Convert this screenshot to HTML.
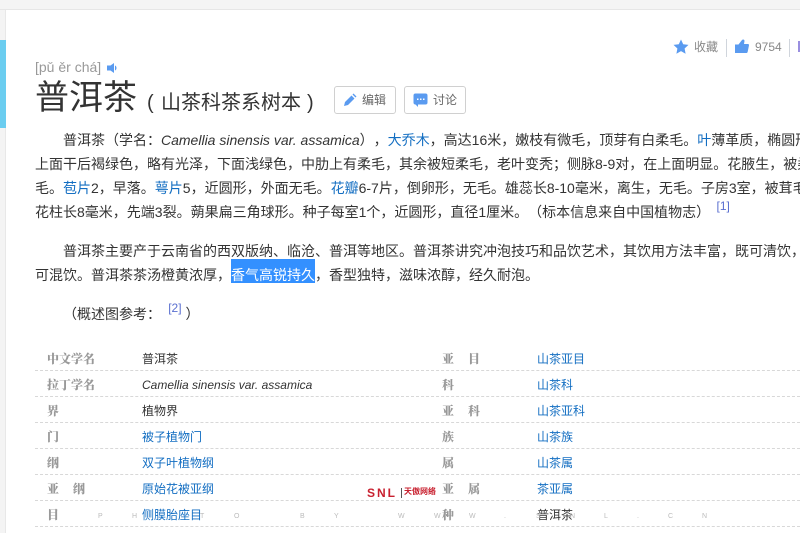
<!DOCTYPE html>
<html lang="zh"><head><meta charset="utf-8">
<style>
html,body{margin:0;padding:0;width:800px;height:533px;overflow:hidden;background:#fff}
body{position:relative;font-family:"Liberation Sans","WenQuanYi Zen Hei","Noto Sans CJK SC",sans-serif;color:#333;font-size:14px;text-spacing-trim:space-all}
.a{position:absolute;white-space:nowrap}
a{color:#136ec2;text-decoration:none}
i{font-style:italic}
.l{position:absolute;left:35px;height:24px;line-height:24px;white-space:nowrap;font-size:14px}
.sup{color:#5a6fd0;font-size:12px;position:relative;top:-7px}
.k{position:absolute;font-family:"Liberation Sans","Noto Serif CJK SC",serif;font-weight:900;color:#999;font-size:12px;line-height:26px;white-space:nowrap}
.k b{margin-left:14px;font-weight:900}
.v{position:absolute;font-size:12px;line-height:26px;white-space:nowrap}
.d{position:absolute;left:35px;right:0;border-top:1px dashed #d8d8d8;height:0}
.w{position:absolute;top:513px;font-size:7px;color:#bbb;line-height:8px}
.btn{position:absolute;top:86px;height:26px;border:1px solid #d0d0d0;border-radius:3px;width:60px;font-size:12px;line-height:26px;color:#666}
</style></head><body>
<div class="a" style="left:0;top:0;width:800px;height:9px;background:#f4f4f4"></div>
<div class="a" style="left:0;top:9px;width:800px;height:1px;background:#e6e6e6"></div>
<div class="a" style="left:0;top:10px;width:5px;height:523px;background:#f4f4f4"></div>
<div class="a" style="left:5px;top:10px;width:1px;height:523px;background:#e8e8e8"></div>
<div class="a" style="left:0;top:40px;width:6px;height:88px;background:#6bcdf0"></div>

<div class="a" style="left:35px;top:58px;font-size:14px;line-height:18px;color:#999">[pǔ ěr chá]</div>
<svg class="a" style="left:106px;top:62px" width="13" height="12" viewBox="0 0 13 12"><path d="M1 3.500h3.500L8 1v10L4.500 8.500H1z" fill="#5a9bf0"/><path d="M9 3.500c2 .7 2 4.300 0 5z" fill="#5a9bf0"/></svg>
<div class="a" style="left:35px;top:77px;font-size:34px;line-height:42px;color:#333">普洱茶</div>
<div class="a" style="left:147px;top:90px;font-size:20px;line-height:26px;color:#333">(</div>
<div class="a" style="left:161px;top:90px;font-size:20px;line-height:26px;color:#333">山茶科茶系树本</div>
<div class="a" style="left:307px;top:90px;font-size:20px;line-height:26px;color:#333">)</div>

<div class="btn" style="left:334px"><svg class="a" style="left:8px;top:6px" width="14" height="14" viewBox="0 0 14 14"><path d="M1 13l1-4 6.500-6.500 3 3L5 12z M9.500 1.500l1-1 3 3-1 1z" fill="#5a9bf0"/></svg><span class="a" style="left:27px;top:0">编辑</span></div>
<div class="btn" style="left:404px"><svg class="a" style="left:8px;top:6px" width="15" height="14" viewBox="0 0 15 14"><rect x="0.500" y="0.500" width="14" height="11" rx="2" fill="#5a9bf0"/><path d="M2 11h3v3z" fill="#5a9bf0"/><path d="M4 5.500h1.500V7H4zM7 5.500h1.500V7H7zM10 5.500h1.500V7H10z" fill="#fff"/></svg><span class="a" style="left:28px;top:0">讨论</span></div>

<svg class="a" style="left:673px;top:39px" width="16" height="15" viewBox="0 0 16 15"><path d="M8 .5l2.200 4.800 5.300.6-3.900 3.600 1 5.200L8 12.100l-4.600 2.600 1-5.200L.5 5.900l5.300-.6z" fill="#5a9bf0"/></svg>
<div class="a" style="left:694px;top:39px;font-size:12px;line-height:16px;color:#888">收藏</div>
<div class="a" style="left:726px;top:39px;width:1px;height:18px;background:#d0d5dc"></div>
<svg class="a" style="left:735px;top:39px" width="14" height="14" viewBox="0 0 14 14"><rect x="0" y="5.500" width="3.500" height="8.500" fill="#5a9bf0"/><path d="M3.500 5.500L7 1c1-1 2.500-.5 2.500 1L9 5h4c.8 0 1 .7 1 1.300l-1.300 6.400c-.2.800-.7 1.300-1.500 1.300H3.500z" fill="#5a9bf0"/></svg>
<div class="a" style="left:755px;top:39px;font-size:12px;line-height:16px;color:#888">9754</div>
<div class="a" style="left:789px;top:39px;width:1px;height:18px;background:#d0d5dc"></div>
<div class="a" style="left:798px;top:41px;width:2px;height:11px;background:#9a8fe0"></div>

<div class="a" style="left:231px;top:259px;width:84px;height:24px;background:#3390ff"></div>

<div class="l" style="top:128px;left:63px">普洱茶（学名：<i>Camellia sinensis var. assamica</i>），<a>大乔木</a>，高达16米，嫩枝有微毛，顶芽有白柔毛。<a>叶</a>薄革质，椭圆形，</div>
<div class="l" style="top:152px">上面干后褐绿色，略有光泽，下面浅绿色，中肋上有柔毛，其余被短柔毛，老叶变秃；侧脉8-9对，在上面明显。花腋生，被柔</div>
<div class="l" style="top:176px">毛。<a>苞片</a>2，早落。<a>萼片</a>5，近圆形，外面无毛。<a>花瓣</a>6-7片，倒卵形，无毛。雄蕊长8-10毫米，离生，无毛。子房3室，被茸毛，</div>
<div class="l" style="top:200px">花柱长8毫米，先端3裂。蒴果扁三角球形。种子每室1个，近圆形，直径1厘米。（标本信息来自中国植物志）<span class="sup" style="margin-left:3px">&nbsp;[1]</span></div>

<div class="l" style="top:239px;left:63px">普洱茶主要产于云南省的西双版纳、临沧、普洱等地区。普洱茶讲究冲泡技巧和品饮艺术，其饮用方法丰富，既可清饮，</div>
<div class="l" style="top:263px">可混饮。普洱茶茶汤橙黄浓厚，<span style="color:#fff">香气高锐持久</span>，香型独特，滋味浓醇，经久耐泡。</div>
<div class="l" style="top:302px;left:63px">（概述图参考： <span class="sup">&nbsp;[2]</span> ）</div>

<div class="d" style="top:370px"></div><div class="d" style="top:396px"></div><div class="d" style="top:422px"></div><div class="d" style="top:448px"></div><div class="d" style="top:474px"></div><div class="d" style="top:500px"></div><div class="d" style="top:526px"></div>

<div class="k" style="left:47px;top:346px">中文学名</div><div class="v" style="left:142px;top:346px">普洱茶</div>
<div class="k" style="left:47px;top:372px">拉丁学名</div><div class="v" style="left:142px;top:372px"><i>Camellia sinensis var. assamica</i></div>
<div class="k" style="left:47px;top:398px">界</div><div class="v" style="left:142px;top:398px">植物界</div>
<div class="k" style="left:47px;top:424px">门</div><div class="v" style="left:142px;top:424px"><a>被子植物门</a></div>
<div class="k" style="left:47px;top:450px">纲</div><div class="v" style="left:142px;top:450px"><a>双子叶植物纲</a></div>
<div class="k" style="left:47px;top:476px">亚<b>纲</b></div><div class="v" style="left:142px;top:476px"><a>原始花被亚纲</a></div>
<div class="k" style="left:47px;top:502px">目</div><div class="v" style="left:142px;top:502px"><a>侧膜胎座目</a></div>

<div class="k" style="left:442px;top:346px">亚<b>目</b></div><div class="v" style="left:537px;top:346px"><a>山茶亚目</a></div>
<div class="k" style="left:442px;top:372px">科</div><div class="v" style="left:537px;top:372px"><a>山茶科</a></div>
<div class="k" style="left:442px;top:398px">亚<b>科</b></div><div class="v" style="left:537px;top:398px"><a>山茶亚科</a></div>
<div class="k" style="left:442px;top:424px">族</div><div class="v" style="left:537px;top:424px"><a>山茶族</a></div>
<div class="k" style="left:442px;top:450px">属</div><div class="v" style="left:537px;top:450px"><a>山茶属</a></div>
<div class="k" style="left:442px;top:476px">亚<b>属</b></div><div class="v" style="left:537px;top:476px"><a>茶亚属</a></div>
<div class="k" style="left:442px;top:502px">种</div><div class="v" style="left:537px;top:502px">普洱茶</div>

<div class="a" style="left:367px;top:487px;font-size:12px;line-height:13px;font-weight:bold;color:#c8202f;letter-spacing:2px">SNL</div>
<div class="a" style="left:401px;top:488px;width:1px;height:10px;background:#555"></div>
<div class="a" style="left:404px;top:487px;font-size:8px;line-height:10px;font-weight:bold;color:#c8202f">天傲网络</div>

<span class="w" style="left:98px">P</span><span class="w" style="left:132px">H</span><span class="w" style="left:200px">T</span><span class="w" style="left:234px">O</span><span class="w" style="left:300px">B</span><span class="w" style="left:334px">Y</span><span class="w" style="left:398px">W</span><span class="w" style="left:434px">W</span><span class="w" style="left:469px">W</span><span class="w" style="left:504px">.</span><span class="w" style="left:536px">S</span><span class="w" style="left:570px">N</span><span class="w" style="left:604px">L</span><span class="w" style="left:637px">.</span><span class="w" style="left:668px">C</span><span class="w" style="left:702px">N</span>
</body></html>
